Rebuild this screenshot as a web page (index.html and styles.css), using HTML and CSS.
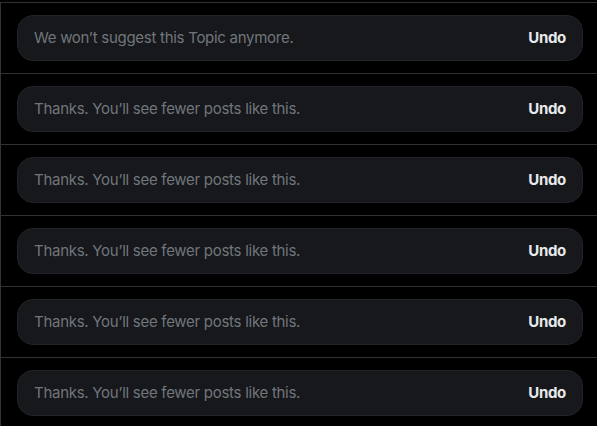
FILE: index.html
```html
<!DOCTYPE html>
<html lang="en">
<head>
<meta charset="utf-8">
<link rel="stylesheet" href="styles.css">
</head>
<body>
<div class="feed">
  <div class="row"><div class="card"><span class="msg">We won’t suggest this Topic anymore.</span><button class="undo">Undo</button></div></div>
  <div class="row"><div class="card"><span class="msg">Thanks. You’ll see fewer posts like this.</span><button class="undo">Undo</button></div></div>
  <div class="row"><div class="card"><span class="msg">Thanks. You’ll see fewer posts like this.</span><button class="undo">Undo</button></div></div>
  <div class="row"><div class="card"><span class="msg">Thanks. You’ll see fewer posts like this.</span><button class="undo">Undo</button></div></div>
  <div class="row"><div class="card"><span class="msg">Thanks. You’ll see fewer posts like this.</span><button class="undo">Undo</button></div></div>
  <div class="row"><div class="card"><span class="msg">Thanks. You’ll see fewer posts like this.</span><button class="undo">Undo</button></div></div>
</div>
</body>
</html>
```
FILE: styles.css
```css
html, body {
  margin: 0;
  padding: 0;
  background: #000;
  height: 100%;
  overflow: hidden;
}
.feed {
  margin-top: 2px;
  border-left: 1px solid #2f3336;
  min-height: 100%;
  font-family: Inter, "Noto Sans", sans-serif;
}
.row {
  border-top: 1px solid #2f3336;
  padding: 12px 14px 12px 16px;
}
.card {
  display: flex;
  align-items: center;
  justify-content: space-between;
  height: 42px;
  padding: 0 16px 2px;
  background: #16181c;
  border: 1px solid #202327;
  border-radius: 16px;
}
.msg {
  color: #71767b;
  font-size: 15px;
  letter-spacing: -0.28px;
}
.undo {
  background: none;
  border: 0;
  padding: 0;
  color: #e7e9ea;
  font-family: inherit;
  font-size: 15px;
  font-weight: 700;
  letter-spacing: -0.3px;
}
```
